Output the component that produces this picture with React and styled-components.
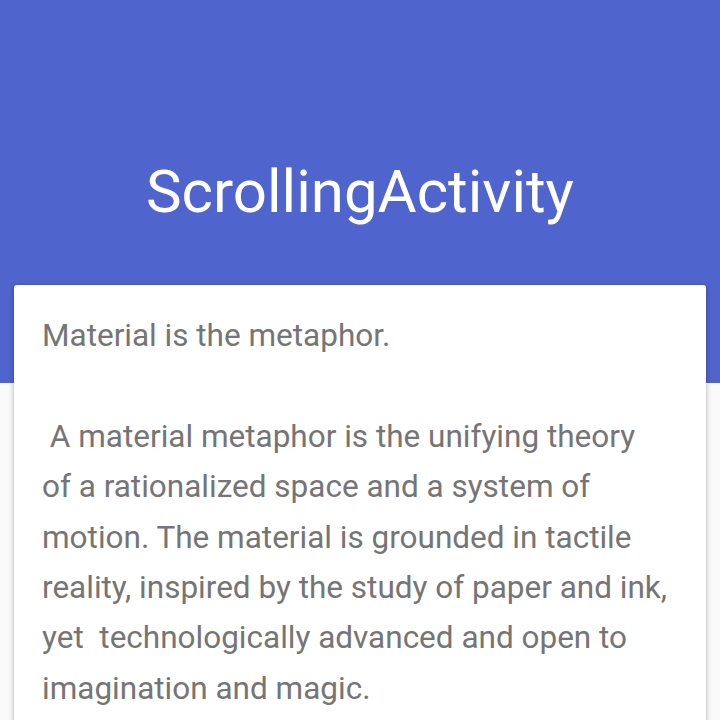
import React from "react";
import styled, { createGlobalStyle } from "styled-components";

const Global = createGlobalStyle`
  html, body { margin: 0; padding: 0; background: #fafafa; }
  body { font-family: Roboto, "Noto Sans", sans-serif; }
`;

const Page = styled.div`
  position: relative;
  width: 720px;
  height: 720px;
  overflow: hidden;
  background: #fafafa;
`;

const AppBar = styled.header`
  height: 383px;
  background: #5064cd;
  display: flex;
  flex-direction: column;
  align-items: center;
  padding-top: 150px;
  box-sizing: border-box;
`;

const Title = styled.h1`
  margin: 0;
  color: #ffffff;
  font-family: Roboto, sans-serif;
  font-weight: 400;
  font-size: 60px;
  line-height: 84px;
`;

const Card = styled.section`
  position: absolute;
  top: 285px;
  left: 14px;
  right: 14px;
  background: #ffffff;
  border-radius: 3px;
  box-shadow: 0 1px 4px rgba(0, 0, 0, 0.25), 0 2px 8px rgba(0, 0, 0, 0.08);
  padding: 26px 37px 40px 28px;
`;

const Body = styled.p`
  margin: 0;
  color: #757575;
  font-family: Roboto, sans-serif;
  font-size: 31.5px;
  line-height: 50.4px;
  white-space: pre-wrap;
`;

const text =
  "Material is the metaphor.\n\n A material metaphor is the unifying theory of a rationalized space and a system of motion. The material is grounded in tactile reality, inspired by the study of paper and ink, yet  technologically advanced and open to imagination and magic.";

export default function App() {
  return (
    <Page>
      <Global />
      <AppBar>
        <Title>ScrollingActivity</Title>
      </AppBar>
      <Card>
        <Body>{text}</Body>
      </Card>
    </Page>
  );
}
